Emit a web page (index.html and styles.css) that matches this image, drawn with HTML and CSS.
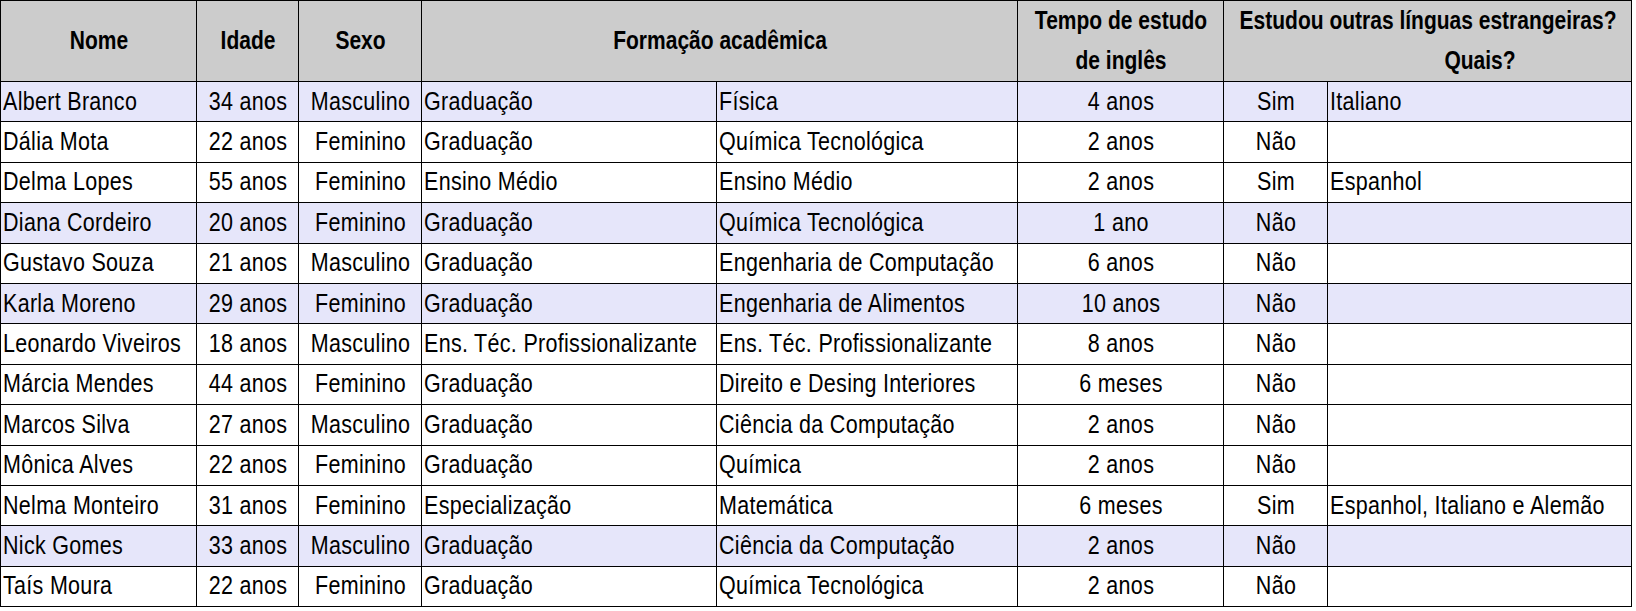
FILE: index.html
```html
<!DOCTYPE html>
<html lang="pt">
<head>
<meta charset="utf-8">
<title>Participantes</title>
<link rel="stylesheet" href="styles.css">
</head>
<body>
<table class="grid">
  <colgroup>
    <col class="c-nome">
    <col class="c-idade">
    <col class="c-sexo">
    <col class="c-form1">
    <col class="c-form2">
    <col class="c-tempo">
    <col class="c-sim">
    <col class="c-ling">
  </colgroup>
  <thead>
    <tr class="head">
      <th><span class="t">Nome</span></th>
      <th><span class="t">Idade</span></th>
      <th><span class="t">Sexo</span></th>
      <th colspan="2"><span class="t">Formação acadêmica</span></th>
      <th><span class="t l1">Tempo de estudo</span><span class="t l1">de inglês</span></th>
      <th colspan="2"><span class="t l1">Estudou outras línguas estrangeiras?</span><span class="t l1 l2">Quais?</span></th>
    </tr>
  </thead>
  <tbody>
    <tr class="hl"><td><span class="t">Albert Branco</span></td><td class="c"><span class="t">34 anos</span></td><td class="c"><span class="t">Masculino</span></td><td><span class="t">Graduação</span></td><td><span class="t">Física</span></td><td class="c"><span class="t">4 anos</span></td><td class="c"><span class="t">Sim</span></td><td><span class="t">Italiano</span></td></tr>
    <tr><td><span class="t">Dália Mota</span></td><td class="c"><span class="t">22 anos</span></td><td class="c"><span class="t">Feminino</span></td><td><span class="t">Graduação</span></td><td><span class="t">Química Tecnológica</span></td><td class="c"><span class="t">2 anos</span></td><td class="c"><span class="t">Não</span></td><td></td></tr>
    <tr><td><span class="t">Delma Lopes</span></td><td class="c"><span class="t">55 anos</span></td><td class="c"><span class="t">Feminino</span></td><td><span class="t">Ensino Médio</span></td><td><span class="t">Ensino Médio</span></td><td class="c"><span class="t">2 anos</span></td><td class="c"><span class="t">Sim</span></td><td><span class="t">Espanhol</span></td></tr>
    <tr class="hl"><td><span class="t">Diana Cordeiro</span></td><td class="c"><span class="t">20 anos</span></td><td class="c"><span class="t">Feminino</span></td><td><span class="t">Graduação</span></td><td><span class="t">Química Tecnológica</span></td><td class="c"><span class="t">1 ano</span></td><td class="c"><span class="t">Não</span></td><td></td></tr>
    <tr><td><span class="t">Gustavo Souza</span></td><td class="c"><span class="t">21 anos</span></td><td class="c"><span class="t">Masculino</span></td><td><span class="t">Graduação</span></td><td><span class="t">Engenharia de Computação</span></td><td class="c"><span class="t">6 anos</span></td><td class="c"><span class="t">Não</span></td><td></td></tr>
    <tr class="hl"><td><span class="t">Karla Moreno</span></td><td class="c"><span class="t">29 anos</span></td><td class="c"><span class="t">Feminino</span></td><td><span class="t">Graduação</span></td><td><span class="t">Engenharia de Alimentos</span></td><td class="c"><span class="t">10 anos</span></td><td class="c"><span class="t">Não</span></td><td></td></tr>
    <tr><td><span class="t">Leonardo Viveiros</span></td><td class="c"><span class="t">18 anos</span></td><td class="c"><span class="t">Masculino</span></td><td><span class="t">Ens. Téc. Profissionalizante</span></td><td><span class="t">Ens. Téc. Profissionalizante</span></td><td class="c"><span class="t">8 anos</span></td><td class="c"><span class="t">Não</span></td><td></td></tr>
    <tr><td><span class="t">Márcia Mendes</span></td><td class="c"><span class="t">44 anos</span></td><td class="c"><span class="t">Feminino</span></td><td><span class="t">Graduação</span></td><td><span class="t">Direito e Desing Interiores</span></td><td class="c"><span class="t">6 meses</span></td><td class="c"><span class="t">Não</span></td><td></td></tr>
    <tr><td><span class="t">Marcos Silva</span></td><td class="c"><span class="t">27 anos</span></td><td class="c"><span class="t">Masculino</span></td><td><span class="t">Graduação</span></td><td><span class="t">Ciência da Computação</span></td><td class="c"><span class="t">2 anos</span></td><td class="c"><span class="t">Não</span></td><td></td></tr>
    <tr><td><span class="t">Mônica Alves</span></td><td class="c"><span class="t">22 anos</span></td><td class="c"><span class="t">Feminino</span></td><td><span class="t">Graduação</span></td><td><span class="t">Química</span></td><td class="c"><span class="t">2 anos</span></td><td class="c"><span class="t">Não</span></td><td></td></tr>
    <tr><td><span class="t">Nelma Monteiro</span></td><td class="c"><span class="t">31 anos</span></td><td class="c"><span class="t">Feminino</span></td><td><span class="t">Especialização</span></td><td><span class="t">Matemática</span></td><td class="c"><span class="t">6 meses</span></td><td class="c"><span class="t">Sim</span></td><td><span class="t">Espanhol, Italiano e Alemão</span></td></tr>
    <tr class="hl"><td><span class="t">Nick Gomes</span></td><td class="c"><span class="t">33 anos</span></td><td class="c"><span class="t">Masculino</span></td><td><span class="t">Graduação</span></td><td><span class="t">Ciência da Computação</span></td><td class="c"><span class="t">2 anos</span></td><td class="c"><span class="t">Não</span></td><td></td></tr>
    <tr><td><span class="t">Taís Moura</span></td><td class="c"><span class="t">22 anos</span></td><td class="c"><span class="t">Feminino</span></td><td><span class="t">Graduação</span></td><td><span class="t">Química Tecnológica</span></td><td class="c"><span class="t">2 anos</span></td><td class="c"><span class="t">Não</span></td><td></td></tr>
  </tbody>
</table>
</body>
</html>
```

FILE: styles.css
```css
html, body {
  margin: 0;
  padding: 0;
  background: #ffffff;
}

.grid {
  border-collapse: collapse;
  table-layout: fixed;
  width: 1632px;
  font-family: "Liberation Sans", Arial, sans-serif;
  color: #000000;
}

.c-nome { width: 196px; }
.c-idade { width: 102px; }
.c-sexo { width: 123px; }
.c-form1 { width: 295px; }
.c-form2 { width: 301px; }
.c-tempo { width: 206px; }
.c-sim { width: 104px; }
.c-ling { width: 304px; }

.grid th,
.grid td {
  border: 1px solid #000000;
  padding: 0 1px 0 2px;
  overflow: hidden;
  white-space: nowrap;
}

.t {
  display: inline-block;
  transform: scaleY(1.2);
}

.head th {
  background: #cccccc;
  height: 80px;
  font-size: 21px;
  font-weight: bold;
  line-height: 40px;
  text-align: center;
  vertical-align: middle;
}

.head .l1 {
  display: block;
}

.head .l2 {
  padding-left: 104px;
}

.grid td {
  height: 39.4px;
  font-size: 21.5px;
  letter-spacing: 0.3px;
  line-height: 30px;
  text-align: left;
  vertical-align: middle;
}

.grid td.c {
  text-align: center;
}

.hl td {
  background: #e6e6fa;
}
```
